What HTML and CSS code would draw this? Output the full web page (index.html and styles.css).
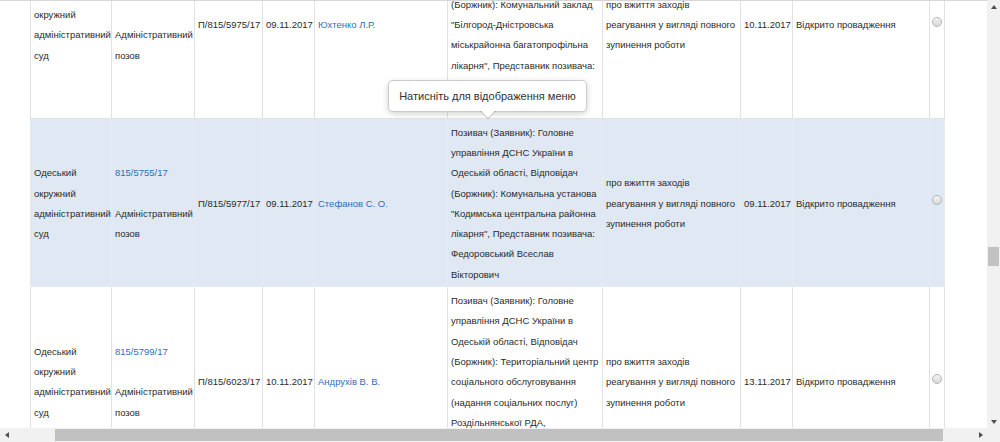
FILE: index.html
```html
<!DOCTYPE html>
<html lang="uk">
<head>
<meta charset="utf-8">
<title>Справи</title>
<link rel="stylesheet" href="styles.css">
</head>
<body>
<div class="page">
  <div class="main">
    <div class="content">
      <table class="cases">
        <colgroup>
          <col class="c-court"><col class="c-num"><col class="c-reg"><col class="c-date"><col class="c-judge"><col class="c-parties"><col class="c-subject"><col class="c-date2"><col class="c-status"><col class="c-sel">
        </colgroup>
        <tbody>
          <tr>
            <td>Одеський окружний адміністративний суд</td>
            <td><a href="#">815/5753/17</a><br><br>Адміністративний позов</td>
            <td>П/815/5975/17</td>
            <td>09.11.2017</td>
            <td><a href="#">Юхтенко Л.Р.</a></td>
            <td>Позивач (Заявник): Головне управління ДСНС України в Одеській області, Відповідач (Боржник): Комунальний заклад "Білгород-Дністровська міськрайонна багатопрофільна лікарня", Представник позивача: Федоровський Всеслав Вікторович</td>
            <td>про вжиття заходів реагування у вигляді повного зупинення роботи</td>
            <td>10.11.2017</td>
            <td>Відкрито провадження</td>
            <td class="sel"><span class="radio"></span></td>
          </tr>
          <tr class="active">
            <td>Одеський окружний адміністративний суд</td>
            <td><a href="#">815/5755/17</a><br><br>Адміністративний позов</td>
            <td>П/815/5977/17</td>
            <td>09.11.2017</td>
            <td><a href="#">Стефанов С. О.</a></td>
            <td>Позивач (Заявник): Головне управління ДСНС України в Одеській області, Відповідач (Боржник): Комунальна установа "Кодимська центральна районна лікарня", Представник позивача: Федоровський Всеслав Вікторович</td>
            <td>про вжиття заходів реагування у вигляді повного зупинення роботи</td>
            <td>09.11.2017</td>
            <td>Відкрито провадження</td>
            <td class="sel"><span class="radio"></span></td>
          </tr>
          <tr>
            <td>Одеський окружний адміністративний суд</td>
            <td><a href="#">815/5799/17</a><br><br>Адміністративний позов</td>
            <td>П/815/6023/17</td>
            <td>10.11.2017</td>
            <td><a href="#">Андрухів В. В.</a></td>
            <td>Позивач (Заявник): Головне управління ДСНС України в Одеській області, Відповідач (Боржник): Територіальний центр соціального обслуговування (надання соціальних послуг) Роздільнянської РДА, Представник позивача: Федоровський</td>
            <td>про вжиття заходів реагування у вигляді повного зупинення роботи</td>
            <td>13.11.2017</td>
            <td>Відкрито провадження</td>
            <td class="sel"><span class="radio"></span></td>
          </tr>
        </tbody>
      </table>
      <div class="tooltip">Натисніть для відображення меню</div>
    </div>
    <div class="vscroll">
      <div class="sb-btn"><span class="arr arr-up"></span></div>
      <div class="vtrack"><div class="vthumb"></div></div>
      <div class="sb-btn"><span class="arr arr-down"></span></div>
    </div>
  </div>
  <div class="hscroll">
    <div class="sb-btn"><span class="arr arr-left"></span></div>
    <div class="htrack"><div class="hthumb"></div></div>
    <div class="sb-btn"><span class="arr arr-right"></span></div>
    <div class="corner"></div>
  </div>
</div>
</body>
</html>
```
FILE: styles.css
```css
* { box-sizing: border-box; }
html, body { margin: 0; padding: 0; background: #fff; }
body {
  font-family: "Liberation Sans", Arial, sans-serif;
  color: #2b2b2b;
}
.page {
  width: 1000px;
  height: 442px;
  display: flex;
  flex-direction: column;
  overflow: hidden;
}
.main {
  flex: 1;
  min-height: 0;
  display: flex;
}
.content {
  flex: 1;
  min-width: 0;
  position: relative;
  overflow: hidden;
  border-top: 1px solid #d6d6d6;
  padding-left: 30px;
}
.cases {
  border-collapse: collapse;
  table-layout: fixed;
  width: 914px;
  margin-top: -72px;
  font-size: 9.5px;
  line-height: 20.3px;
}
.cases td {
  border: 1px solid #e2e2e2;
  padding: 4px 3px 1px 3px;
  vertical-align: middle;
  overflow: hidden;
}
.cases tr.active td { background: #dfe8f3; border-color: #e6ebf1; }
.cases a { color: #2f6fb7; text-decoration: none; }
.c-court { width: 81px; }
.c-num { width: 83px; }
.c-reg { width: 68px; }
.c-date { width: 52px; }
.c-judge { width: 133px; }
.c-parties { width: 155px; }
.c-subject { width: 138px; }
.c-date2 { width: 52px; }
.c-status { width: 137px; }
.c-sel { width: 15px; }
.cases td.sel { padding: 0; line-height: normal; }
.radio {
  display: block;
  width: 10px;
  height: 10px;
  margin: 0 auto 4px auto;
  border-radius: 50%;
  border: 1px solid #b4b4b4;
  background: linear-gradient(#f4f4f4, #d8d8d8);
}
.tooltip {
  position: absolute;
  left: 388px;
  top: 79px;
  width: 199px;
  height: 32px;
  background: #fff;
  border: 1px solid rgba(0, 0, 0, 0.2);
  border-radius: 5px;
  box-shadow: 0 2px 6px rgba(0, 0, 0, 0.18);
  font-size: 11px;
  line-height: 30px;
  text-align: center;
  color: #333;
}
.tooltip::before,
.tooltip::after {
  content: "";
  position: absolute;
  left: 50%;
  width: 0;
  height: 0;
  border-style: solid;
}
.tooltip::before {
  top: 100%;
  margin-left: -8px;
  border-width: 8px 8px 0 8px;
  border-color: rgba(0, 0, 0, 0.25) transparent transparent transparent;
}
.tooltip::after {
  top: 100%;
  margin-left: -7px;
  border-width: 7px 7px 0 7px;
  border-color: #fff transparent transparent transparent;
}
.vscroll {
  width: 13px;
  background: #f1f1f1;
  display: flex;
  flex-direction: column;
}
.vtrack { flex: 1; }
.vthumb {
  margin: 234px 1px 0 1px;
  height: 19px;
  background: #c1c1c1;
}
.sb-btn {
  width: 13px;
  height: 13px;
  flex: none;
  display: flex;
  align-items: center;
  justify-content: center;
}
.hscroll {
  height: 14px;
  display: flex;
  background: #f1f1f1;
}
.hscroll .sb-btn { height: 14px; }
.htrack { flex: 1; padding-top: 1px; }
.hthumb {
  margin-left: 42px;
  width: 888px;
  height: 12px;
  background: #c1c1c1;
}
.corner { width: 13px; background: #f1f1f1; }
.arr { width: 0; height: 0; border-style: solid; }
.arr-up { border-width: 0 3px 4px 3px; border-color: transparent transparent #505050 transparent; }
.arr-down { border-width: 4px 3px 0 3px; border-color: #505050 transparent transparent transparent; }
.arr-left { border-width: 3px 4px 3px 0; border-color: transparent #505050 transparent transparent; }
.arr-right { border-width: 3px 0 3px 4px; border-color: transparent transparent transparent #505050; }
```
